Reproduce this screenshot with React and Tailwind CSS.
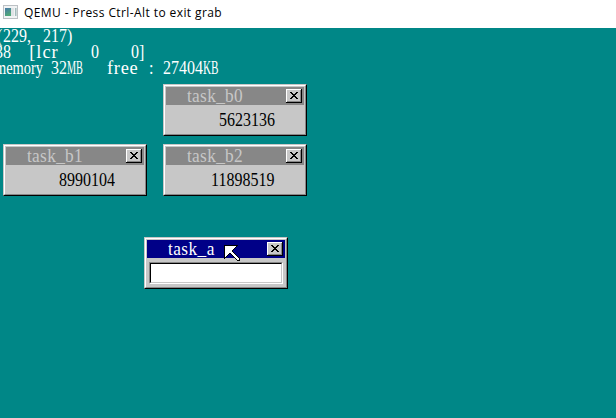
import React from 'react';

const CLOSE = [
  'OOOOOOOOOOOOOOO@',
  'OQQQQQQQQQQQQQ$@',
  'OQQQQQQQQQQQQQ$@',
  'OQQQ@@QQQQ@@QQ$@',
  'OQQQQ@@QQ@@QQQ$@',
  'OQQQQQ@@@@QQQQ$@',
  'OQQQQQQ@@QQQQQ$@',
  'OQQQQQ@@@@QQQQ$@',
  'OQQQQ@@QQ@@QQQ$@',
  'OQQQ@@QQQQ@@QQ$@',
  'OQQQQQQQQQQQQQ$@',
  'OQQQQQQQQQQQQQ$@',
  'O$$$$$$$$$$$$$$@',
  '@@@@@@@@@@@@@@@@',
];

const CURSOR = [
  '@@@@@@@@@@@@@@..',
  '@OOOOOOOOOOO@...',
  '@OOOOOOOOOO@....',
  '@OOOOOOOOO@.....',
  '@OOOOOOOO@......',
  '@OOOOOOO@.......',
  '@OOOOOOO@.......',
  '@OOOOOOOO@......',
  '@OOOO@@OOO@.....',
  '@OOO@..@OOO@....',
  '@OO@....@OOO@...',
  '@O@......@OOO@..',
  '@@........@OOO@.',
  '@..........@OOO@',
  '............@OO@',
  '.............@@@',
];

const INK = { O: '#ffffff', Q: '#c7c7c7', $: '#878787', '@': '#000000' };

function Bitmap({ rows, className }) {
  return (
    <svg
      className={className}
      width={16}
      height={rows.length}
      viewBox={`0 0 16 ${rows.length}`}
      shapeRendering="crispEdges"
    >
      {rows.flatMap((row, y) =>
        [...row].map((c, x) =>
          INK[c] ? <rect key={`${x}-${y}`} x={x} y={y} width="1" height="1" fill={INK[c]} /> : null
        )
      )}
    </svg>
  );
}

// A run of text that occupies a whole number of 8x16 character cells.
function Cells({ w, fit = '', children }) {
  return (
    <span className="block shrink-0 whitespace-pre" style={{ width: w * 8 }}>
      <span className={`inline-block origin-left ${fit}`}>{children}</span>
    </span>
  );
}

function Line({ className = '', children }) {
  return (
    <div
      className={`flex h-4 origin-top scale-y-[1.2] font-['Liberation_Serif',serif] text-[16px] leading-[14px] ${className}`}
    >
      {children}
    </div>
  );
}

function Window({ title, fit, active, position, children }) {
  return (
    <div
      className={`absolute h-[52px] w-[144px] border border-t-[#c7c7c7] border-l-[#c7c7c7] border-r-black border-b-black ${position}`}
    >
      <div className="h-full border border-t-white border-l-white border-r-[#878787] border-b-[#878787] bg-[#c7c7c7] p-px">
        <div
          className={`flex h-[18px] justify-between pt-px pr-[2px] pl-[21px] ${
            active ? 'bg-[#000087] text-white' : 'bg-[#878787] text-[#c7c7c7]'
          }`}
        >
          <Line>
            <Cells w={title.length} fit={fit}>{title}</Cells>
          </Line>
          <Bitmap rows={CLOSE} className="mt-px block shrink-0" />
        </div>
        {children}
      </div>
    </div>
  );
}

function Counter({ value }) {
  return (
    <Line className="mt-[7px] justify-end pr-[29px] text-black">
      <Cells w={value.length}>{value}</Cells>
    </Line>
  );
}

export default function App() {
  return (
    <div className="flex h-[418px] w-[616px] flex-col overflow-hidden bg-[#008787]">
      <header className="flex h-7 shrink-0 items-center bg-white pb-[3px] pl-[3px]">
        <svg width="15" height="15" viewBox="0 0 15 15" className="block">
          <defs>
            <linearGradient id="screen" x1="0" y1="0" x2="0.4" y2="1">
              <stop offset="0" stopColor="#4878a8" />
              <stop offset="1" stopColor="#4fa878" />
            </linearGradient>
          </defs>
          <rect x="0.5" y="0.5" width="14" height="13" fill="#f1f3f4" stroke="#bcc0c4" />
          <rect x="2" y="3" width="6" height="8" fill="url(#screen)" />
          <rect x="8" y="3" width="3" height="8" fill="#dfe3e6" />
          <rect x="12" y="3" width="1.5" height="8" fill="#a3bcbc" />
        </svg>
        <span className="ml-[6px] whitespace-pre font-['Open_Sans',sans-serif] text-[12px] leading-4 tracking-[0.41px] text-black">
          QEMU - Press Ctrl-Alt to exit grab
        </span>
      </header>

      <main className="relative flex-1 overflow-hidden">
        <div className="-ml-[5px] text-white">
          <Line>
            <Cells w={1} fit="pl-[2px]">(</Cells>
            <Cells w={3}>229</Cells>
            <Cells w={2}>, </Cells>
            <Cells w={3}>217</Cells>
            <Cells w={1}>)</Cells>
          </Line>
          <Line>
            <Cells w={4}>38</Cells>
            <Cells w={4} fit="pl-[2px] scale-x-[1.15] tracking-[0.8px]">[lcr</Cells>
            <Cells w={4}> </Cells>
            <Cells w={5}>0</Cells>
            <Cells w={2}>0]</Cells>
          </Line>
          <Line>
            <Cells w={7} fit="scale-x-[0.9]">memory</Cells>
            <Cells w={2}>32</Cells>
            <Cells w={5} fit="scale-x-[0.64]">MB</Cells>
            <Cells w={5} fit="scale-x-[1.15] tracking-[0.6px]">free</Cells>
            <Cells w={2} fit="pl-[2px]">:</Cells>
            <Cells w={5}>27404</Cells>
            <Cells w={2} fit="scale-x-[0.7]">KB</Cells>
          </Line>
        </div>

        <Window title="task_b0" fit="scale-x-[1.08] tracking-[0.3px]" position="left-[163px] top-[56px]">
          <Counter value="5623136" />
        </Window>
        <Window title="task_b1" fit="scale-x-[1.08] tracking-[0.3px]" position="left-[3px] top-[116px]">
          <Counter value="8990104" />
        </Window>
        <Window title="task_b2" fit="scale-x-[1.08] tracking-[0.3px]" position="left-[163px] top-[116px]">
          <Counter value="11898519" />
        </Window>
        <Window title="task_a" fit="scale-x-[1.08] tracking-[0.4px]" active position="left-[144px] top-[209px]">
          <div className="mx-[2px] mt-1 h-[22px] border border-t-[#878787] border-l-[#878787] border-r-white border-b-white">
            <div className="h-full border border-t-black border-l-black border-r-[#c7c7c7] border-b-[#c7c7c7] bg-white" />
          </div>
        </Window>

        <Bitmap rows={CURSOR} className="absolute left-[224px] top-[217px]" />
      </main>
    </div>
  );
}
